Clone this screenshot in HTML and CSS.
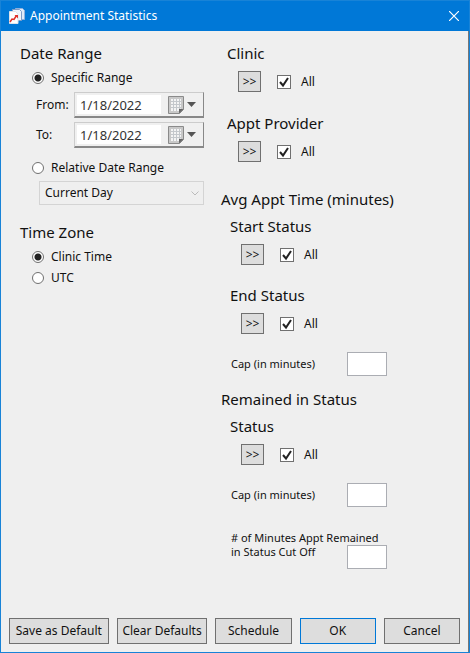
FILE: index.html
```html
<!DOCTYPE html>
<html lang="en">
<head>
	<meta charset="UTF-8">
	<title>Appointment Statistics</title>
	<link rel="stylesheet" href="styles.css">
</head>
<body>
	<form class="window">
		<header class="titlebar">
			<svg class="app-icon" width="16" height="16" viewBox="0 0 16 16">
				<path d="M6.500 .5h7l2 2v9h-9z" fill="#dfeaf8" stroke="#8fb0dc"/>
				<path d="M3.500 1.500h7l2 2v9h-9z" fill="#eef4fb" stroke="#7d9cc8"/>
				<path d="M.5 3.500h6l2.500 2.500v9.500H.5z" fill="#fff" stroke="#dfe3ea"/>
				<path d="M1 14l2-3 2 .5 2.500-4" fill="none" stroke="#e0302a" stroke-width="1.500"/>
				<path d="M5.500 7H9v3.500z" fill="#e0302a"/>
			</svg>
			<h1>Appointment Statistics</h1>
			<button type="button" class="close" aria-label="Close">
				<svg width="10" height="10" viewBox="0 0 10 10"><path d="M0 0l10 10M10 0L0 10" stroke="#fff" stroke-width="1.200"/></svg>
			</button>
		</header>

		<main class="content">
			<div class="left">
				<h2>Date Range</h2>
				<label class="radio"><input type="radio" name="range" checked>Specific Range</label>
				<div class="date-row">
					<label for="from">From:</label>
					<div class="date-box">
						<input type="text" id="from" value="1/18/2022">
						<button type="button" aria-label="Pick from date">
							<svg width="28" height="18" viewBox="0 0 28 18">
								<path d="M.5 .5h15v13l-4 4h-11z" fill="#c8c8c8" stroke="#8a8a8a"/>
								<path d="M3 3h10v9l-2 3H3z" fill="#f4f4f4"/>
								<path d="M3 5.500h10M3 8.500h10M3 11.500h10M5.500 3v12M8.500 3v12M11.500 3v10" stroke="#c4c8cc"/>
								<path d="M11 17.500v-4.500h4.500z" fill="#666"/>
								<path d="M19 6h9l-4.500 5z" fill="#555"/>
							</svg>
						</button>
					</div>
				</div>
				<div class="date-row">
					<label for="to">To:</label>
					<div class="date-box">
						<input type="text" id="to" value="1/18/2022">
						<button type="button" aria-label="Pick to date">
							<svg width="28" height="18" viewBox="0 0 28 18">
								<path d="M.5 .5h15v13l-4 4h-11z" fill="#c8c8c8" stroke="#8a8a8a"/>
								<path d="M3 3h10v9l-2 3H3z" fill="#f4f4f4"/>
								<path d="M3 5.500h10M3 8.500h10M3 11.500h10M5.500 3v12M8.500 3v12M11.500 3v10" stroke="#c4c8cc"/>
								<path d="M11 17.500v-4.500h4.500z" fill="#666"/>
								<path d="M19 6h9l-4.500 5z" fill="#555"/>
							</svg>
						</button>
					</div>
				</div>
				<label class="radio relative"><input type="radio" name="range">Relative Date Range</label>
				<div class="select-box">
					<select aria-label="Relative date range" disabled><option>Current Day</option></select>
					<svg width="8" height="5" viewBox="0 0 8 5"><path d="M.5 .5L4 4 7.500 .5" fill="none" stroke="#bbb"/></svg>
				</div>

				<h2 class="zone">Time Zone</h2>
				<label class="radio"><input type="radio" name="zone" checked>Clinic Time</label>
				<label class="radio"><input type="radio" name="zone">UTC</label>
			</div>

			<div class="right">
				<section class="filter">
					<h2>Clinic</h2>
					<div class="pick">
						<button type="button">&gt;&gt;</button>
						<label><input type="checkbox" checked>All</label>
					</div>
				</section>
				<section class="filter">
					<h2>Appt Provider</h2>
					<div class="pick">
						<button type="button">&gt;&gt;</button>
						<label><input type="checkbox" checked>All</label>
					</div>
				</section>

				<section class="stats average">
					<h2>Avg Appt Time (minutes)</h2>
					<div class="status">
						<h3>Start Status</h3>
						<div class="pick">
							<button type="button">&gt;&gt;</button>
							<label><input type="checkbox" checked>All</label>
						</div>
					</div>
					<div class="status">
						<h3>End Status</h3>
						<div class="pick">
							<button type="button">&gt;&gt;</button>
							<label><input type="checkbox" checked>All</label>
						</div>
					</div>
					<div class="number">
						<label for="avg-cap">Cap (in minutes)</label>
						<input type="text" id="avg-cap">
					</div>
				</section>

				<section class="stats">
					<h2>Remained in Status</h2>
					<div class="status">
						<h3>Status</h3>
						<div class="pick">
							<button type="button">&gt;&gt;</button>
							<label><input type="checkbox" checked>All</label>
						</div>
					</div>
					<div class="number">
						<label for="rem-cap">Cap (in minutes)</label>
						<input type="text" id="rem-cap">
					</div>
					<div class="number cutoff">
						<label for="cutoff"># of Minutes Appt Remained<br>in Status Cut Off</label>
						<input type="text" id="cutoff">
					</div>
				</section>
			</div>
		</main>

		<footer class="buttons">
			<button type="button" class="save">Save as Default</button>
			<button type="button" class="clear">Clear Defaults</button>
			<button type="button">Schedule</button>
			<button type="submit" class="ok">OK</button>
			<button type="button">Cancel</button>
		</footer>
	</form>
</body>
</html>
```

FILE: styles.css
```css
*{
	box-sizing: border-box;
	margin: 0;
	padding: 0;
}

body{
	background: #efefef;
	color: #111;
	font: 12px/16px "Noto Sans", "Open Sans", sans-serif;
}

button, input, select{
	font: inherit;
	color: inherit;
	border-radius: 0;
}

h2, h3{
	font-size: 15px;
	line-height: 20px;
	font-weight: normal;
}

svg{
	display: block;
}

.window{
	display: flex;
	flex-direction: column;
	min-height: 100vh;
	border: 1px solid #1883d7;
}

/* title bar */
.titlebar{
	display: flex;
	align-items: center;
	gap: 5px;
	height: 30px;
	padding: 0 10px 0 8px;
	background: #0078d7;
	color: #fff;
}

.titlebar h1{
	flex: 1;
	font-size: 12px;
	font-weight: normal;
}

.close{
	border: none;
	background: none;
}

.content{
	display: grid;
	grid-template-columns: 184px 1fr;
	column-gap: 17px;
	flex: 1;
	padding: 12px 19px;
	border-right: 1px solid #777;
}

/* left column */
.radio{
	display: flex;
	align-items: center;
	gap: 7px;
	height: 21px;
	padding-left: 12px;
}

.radio input{
	appearance: none;
	width: 12px;
	height: 12px;
	border: 1px solid #707070;
	border-radius: 50%;
	background: #fff;
}

.radio input:checked{
	background: radial-gradient(circle, #222 3px, #fff 4px);
}

h2 + .radio{
	margin-top: 4px;
}

.date-row{
	display: flex;
	align-items: center;
	margin-top: 4px;
}

.date-row label{
	flex: none;
	width: 54px;
	padding-left: 16px;
}

.date-box{
	display: flex;
	flex: 1;
	min-width: 0;
	height: 26px;
	padding: 2px;
	border: 1px solid #ccc;
	border-right-color: #888;
	border-bottom: 2px solid #888;
	background: #f0f0f0;
}

.date-box input{
	flex: 1;
	min-width: 0;
	padding-left: 3px;
	border: none;
	background: #fff;
	color: #333;
	font-size: 13px;
}

.date-box button{
	padding: 0 5px 0 7px;
	border: none;
	background: none;
}

.relative{
	margin-top: 9px;
}

.select-box{
	display: flex;
	align-items: center;
	height: 24px;
	margin: 3px 0 0 19px;
	padding: 0 4px 0 5px;
	border: 1px solid #d4d4d4;
}

.select-box select{
	flex: 1;
	appearance: none;
	border: none;
	background: none;
	opacity: 1;
}

.zone{
	margin-top: 17px;
}

/* right column */
.filter{
	margin-bottom: 21px;
	padding-left: 6px;
}

.pick{
	display: flex;
	align-items: center;
	gap: 16px;
	margin-top: 8px;
	padding-left: 11px;
}

.pick button{
	width: 23px;
	height: 21px;
	border: 1px solid #707070;
	background: #ddd;
	line-height: 16px;
}

.pick label{
	display: flex;
	align-items: center;
	gap: 10px;
}

.pick input{
	appearance: none;
	width: 14px;
	height: 14px;
	border: 1px solid #707070;
	background: #fff;
}

.pick input:checked{
	background: #fff url("data:image/svg+xml,%3Csvg xmlns='http://www.w3.org/2000/svg' viewBox='0 0 12 12'%3E%3Cpath d='M2 6l3 3.500L10 2' fill='none' stroke='%23222' stroke-width='2'/%3E%3C/svg%3E");
}

.average{
	margin-top: 27px;
	margin-bottom: 13px;
}

.status{
	margin-top: 7px;
	padding-left: 9px;
}

.status + .status{
	margin-top: 20px;
}

.number{
	display: flex;
	align-items: center;
	margin-top: 18px;
	padding-left: 10px;
	font-size: 11px;
	line-height: 14px;
}

.number label{
	width: 116px;
	white-space: nowrap;
}

.number input{
	width: 40px;
	height: 24px;
	padding: 0 3px;
	border: 1px solid #abadb3;
	background: #fff;
}

.cutoff{
	align-items: flex-start;
	margin-top: 24px;
}

.cutoff input{
	margin-top: 14px;
}

/* bottom buttons */
.buttons{
	display: flex;
	gap: 8px;
	padding: 0 8px 8px;
	border-right: 1px solid #777;
}

.buttons button{
	flex: 76 1 0;
	height: 26px;
	border: 1px solid #707070;
	background: #ddd;
	white-space: nowrap;
}

.buttons .save{
	flex-grow: 100;
}

.buttons .clear{
	flex-grow: 91;
}

.buttons .ok{
	border-color: #0078d7;
}
```
